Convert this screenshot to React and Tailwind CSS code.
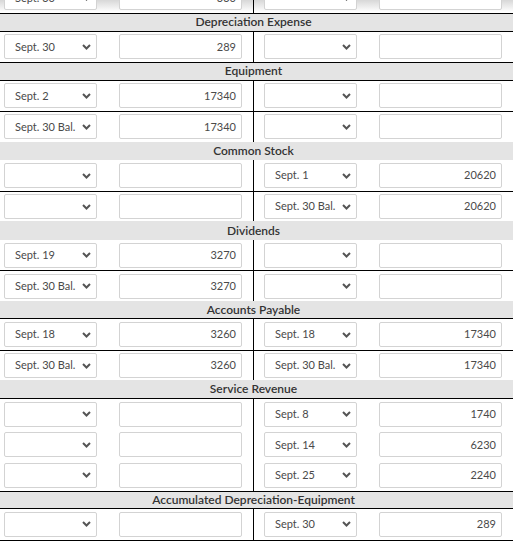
import React from 'react';

const sections = [
  {
    title: 'Depreciation Expense',
    top: true,
    bottom: true,
    rows: [{ cells: ['Sept. 30', '289', '', ''] }],
  },
  {
    title: 'Equipment',
    top: true,
    bottom: true,
    rows: [
      { cells: ['Sept. 2', '17340', '', ''] },
      { cells: ['Sept. 30 Bal.', '17340', '', ''], line: true },
    ],
  },
  {
    title: 'Common Stock',
    rows: [
      { cells: ['', '', 'Sept. 1', '20620'] },
      { cells: ['', '', 'Sept. 30 Bal.', '20620'], line: true },
    ],
  },
  {
    title: 'Dividends',
    rows: [
      { cells: ['Sept. 19', '3270', '', ''] },
      { cells: ['Sept. 30 Bal.', '3270', '', ''], line: true },
    ],
  },
  {
    title: 'Accounts Payable',
    bottom: true,
    rows: [
      { cells: ['Sept. 18', '3260', 'Sept. 18', '17340'] },
      { cells: ['Sept. 30 Bal.', '3260', 'Sept. 30 Bal.', '17340'], line: true },
    ],
  },
  {
    title: 'Service Revenue',
    bottom: true,
    rows: [
      { cells: ['', '', 'Sept. 8', '1740'] },
      { cells: ['', '', 'Sept. 14', '6230'] },
      { cells: ['', '', 'Sept. 25', '2240'] },
    ],
  },
  {
    title: 'Accumulated Depreciation-Equipment',
    top: true,
    bottom: true,
    rows: [{ cells: ['', '', 'Sept. 30', '289'] }],
  },
];

const Chevron = () => (
  <svg width="9" height="6" viewBox="0 0 9 6" className="shrink-0">
    <polyline points="1,1 4.5,4.5 8,1" fill="none" stroke="#555" strokeWidth="2" />
  </svg>
);

const DateSelect = ({ value }) => (
  <div className="flex h-[25px] w-[93px] shrink-0 items-center justify-between rounded-[2px] border border-[#d3d3d3] bg-white pl-[10px] pr-[5px] text-[11px] text-[#4a4a4a]">
    <span className="whitespace-nowrap">{value}</span>
    <Chevron />
  </div>
);

const AmountInput = ({ value }) => (
  <div className="ml-[22px] flex h-[25px] w-[123px] shrink-0 items-center justify-end rounded-[2px] border border-[#d3d3d3] bg-white pr-[5px] text-[11px] text-[#4a4a4a]">
    {value}
  </div>
);

const Row = ({ cells, line, className = '' }) => (
  <div className={`flex h-[30.5px] ${line ? 'border-t border-black' : ''} ${className}`}>
    <div className="flex w-[254px] items-center border-r border-black pl-[4px]">
      <DateSelect value={cells[0]} />
      <AmountInput value={cells[1]} />
    </div>
    <div className="flex flex-1 items-center pl-[10px]">
      <DateSelect value={cells[2]} />
      <AmountInput value={cells[3]} />
    </div>
  </div>
);

const Header = ({ title, top, bottom }) => (
  <div
    className={`flex h-[18.6px] items-center justify-center bg-[#e4e4e4] pr-[6px] text-[12px] font-semibold text-[#333] ${
      top ? 'border-t border-black' : ''
    } ${bottom ? 'border-b border-black' : ''}`}
  >
    {title}
  </div>
);

export default function App() {
  return (
    <div className="min-h-[549px] bg-white font-['Lato',sans-serif]">
      <div className="w-[513px]">
        <Row
          cells={['Sept. 30', '330', '', '']}
          className="-mt-[17.5px] bg-[linear-gradient(to_bottom,#fff_16px,#d9d9d9_17.5px,#fff_29px)]"
        />
        {sections.map((s) => (
          <div key={s.title}>
            <Header title={s.title} top={s.top} bottom={s.bottom} />
            {s.rows.map((r, i) => (
              <Row key={i} cells={r.cells} line={r.line} />
            ))}
          </div>
        ))}
        <div className="border-t border-black" />
      </div>
    </div>
  );
}
